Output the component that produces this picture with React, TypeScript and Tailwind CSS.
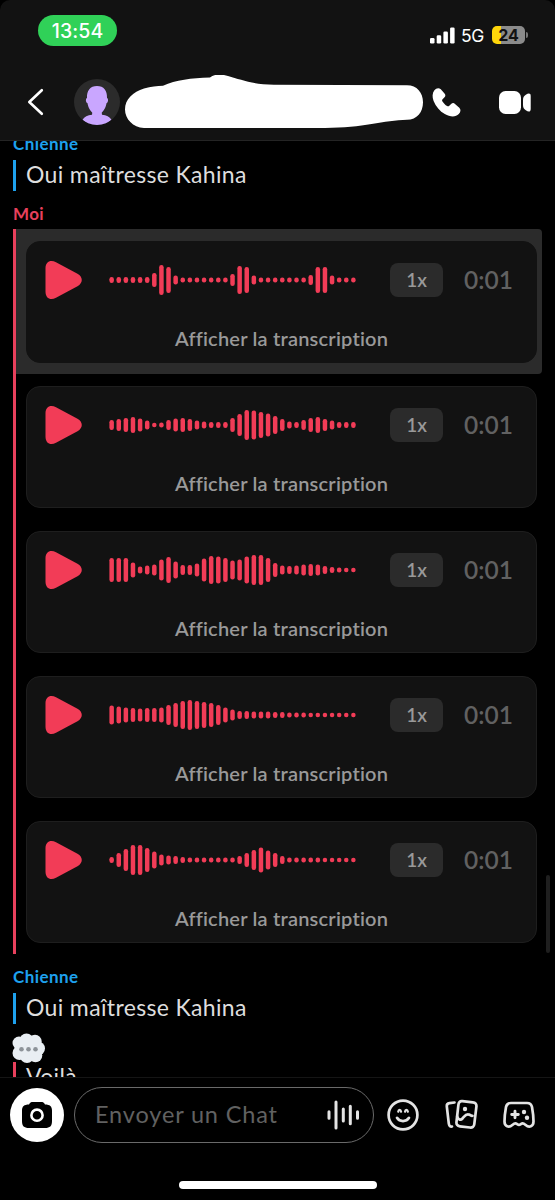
interface VoiceNote {
  id: number;
  levels: number[];
  highlighted?: boolean;
}

const notes: VoiceNote[] = [
  {
    id: 1,
    highlighted: true,
    levels: [6, 6, 6, 6, 6, 6, 14, 30, 26, 9, 5, 5, 5, 5, 5, 5, 5, 12, 28, 26, 9, 5, 5, 5, 5, 5, 5, 5, 10, 26, 26, 9, 5, 5, 5],
  },
  {
    id: 2,
    levels: [10, 12, 14, 16, 13, 9, 4.5, 5, 10, 13, 14, 12, 9, 7, 6, 6, 6, 14, 22, 30, 29, 26, 23, 18, 12, 7, 6, 10, 14, 16, 12, 9, 6, 6, 6],
  },
  {
    id: 3,
    levels: [24, 24, 24, 15, 7, 9, 11, 21, 26, 17, 10, 10, 13, 23, 28, 27, 24, 19, 21, 27, 30, 30, 24, 14, 9, 8, 9, 11, 12, 11, 8, 6, 5, 4.5, 4.5],
  },
  {
    id: 4,
    levels: [19, 17, 15, 14, 13, 14, 14, 15, 20, 24, 28, 30, 28, 26, 24, 20, 15, 11, 8, 8, 7, 7, 7, 6, 6, 5, 5, 5, 4.5, 4.5, 4.5, 4.5, 4.5, 4.5, 4.5],
  },
  {
    id: 5,
    levels: [6, 14, 22, 30, 30, 24, 17, 11, 9, 8, 6, 5, 5, 5, 5, 5, 5, 5, 8, 14, 20, 25, 19, 14, 8, 5, 5, 5, 5, 5, 4.5, 4.5, 4.5, 4.5, 4.5],
  },
];

function StatusBar() {
  return (
    <div className="flex h-[62px] items-start justify-between pl-[38px] pr-[27px] pt-[15px]">
      <div className="flex h-[31px] w-[79px] items-center justify-center rounded-full bg-[#30d158] pt-[2px] font-['Inter'] text-[19.5px] font-medium tracking-[0.1px] text-white">
        13:54
      </div>
      <div className="mt-[11px] flex h-[18px] items-center">
        <svg width="25" height="17" viewBox="0 0 25 17" fill="#fff">
          <rect x="0" y="11" width="4.5" height="5.5" rx="1.3" />
          <rect x="6.7" y="8.2" width="4.5" height="8.3" rx="1.3" />
          <rect x="13.4" y="4.5" width="4.5" height="12" rx="1.3" />
          <rect x="20.1" y="0.5" width="4.5" height="16" rx="1.3" />
        </svg>
        <span className="ml-[6px] w-[25px] whitespace-nowrap pt-[2px] font-['Inter'] text-[17.5px] leading-[18px] tracking-[-0.3px] text-white">5G</span>
        <div className="ml-[6px] flex h-[18px] w-[33px] items-center justify-center rounded-[5px] bg-[linear-gradient(to_right,#ffd60a_26%,#8b8b8b_26%)] font-['Inter'] text-[16px] font-bold leading-none text-[#121212]">
          24
        </div>
        <div className="ml-[1px] h-[6px] w-[2px] rounded-r-full bg-[#777]" />
      </div>
    </div>
  );
}

function Header() {
  return (
    <header className="h-[141px] shrink-0 rounded-t-[10px] border-b border-[#242424] bg-[#121212]">
      <StatusBar />
      <div className="flex h-[80px] items-center">
        <svg className="ml-[27px]" width="18" height="28" viewBox="0 0 18 28" fill="none" stroke="#fff" strokeWidth="2.6" strokeLinecap="round" strokeLinejoin="round">
          <path d="M14.8 2.2L2.3 14l12.5 11.8" />
        </svg>
        <svg className="ml-[29px]" width="46" height="46" viewBox="0 0 46 46">
          <defs>
            <clipPath id="avatar">
              <circle cx="23" cy="23" r="23" />
            </clipPath>
          </defs>
          <circle cx="23" cy="23" r="23" fill="#2b2b2b" />
          <g fill="#c9a6ff" clipPath="url(#avatar)">
            <path d="M23 7C16.200 7 12.700 11.500 13 19c-1.600.4-1.400 4.500.5 5.200.8 5.300 4.300 11 9.500 11s8.700-5.700 9.500-11c1.900-.7 2.100-4.800.5-5.200.3-7.500-3.200-12-10-12z" />
            <path d="M18.500 32h9l.5 3.700c4.500.4 7.500 2 9.500 5L30 47H16l-7.500-6.300c2-3 5-4.600 9.500-5z" />
          </g>
        </svg>
        <svg className="ml-[4px]" width="300" height="54" viewBox="0 0 300 54" fill="#fff">
          <path d="M1 34.500C1 24 9 17 20 13.500c7-2 13-2.300 19-2.800C52 5 67 3 86 2.500c4-3.500 11-3.700 18-1.500 13 3.500 24 8.500 46 8.700l133 .5c10 0 16 7.500 16 17 0 10-6 17.500-16 17.500-23 .5-44 8.200-82 8.200H20C9 52.500 1 44 1 34.500z" />
        </svg>
        <svg className="ml-[7px]" width="31" height="31" viewBox="0 0 31 31" fill="#fff">
          <path d="M3.400 3.200C5.200.9 8 .5 9.800 2.300l3.700 4.100c1.200 1.300 1.100 2.700 0 3.900l-1.900 1.900c-.7.8-.6 1.500-.1 2.200 1.200 1.900 2.700 3.400 4.600 4.600.7.500 1.500.5 2.200-.2l1.800-1.800c1.200-1.200 2.700-1.300 3.900-.1l4.300 3.800c1.800 1.800 1.500 4.400-.5 6.400-3.200 3.200-8.700 3-14-.1C8.900 24.100 4.800 19.600 2.600 13.900 1.100 9.900 1.200 6 3.400 3.200z" />
        </svg>
        <svg className="ml-[36px]" width="34" height="25" viewBox="0 0 34 25" fill="#fff">
          <rect x="1" y="1" width="22" height="23" rx="6.500" />
          <path d="M25 10c0-2.600 1-4 2.800-5.200C30.500 3 32.700 3 32.700 6v13c0 3-2.200 3.200-4.900 1.300C26 19.100 25 17.700 25 15z" />
        </svg>
      </div>
    </header>
  );
}

function Waveform({ levels }: { levels: number[] }) {
  return (
    <svg width="248" height="32" viewBox="0 0 248 32" fill="#f23c57">
      {levels.map((h, i) => (
        <rect key={i} x={0.4 + i * 7.11} y={16 - h / 2} width="4.5" height={h} rx="2.2" />
      ))}
    </svg>
  );
}

function VoiceMessage({ note }: { note: VoiceNote }) {
  return (
    <div className={`h-[145px] w-[526px] rounded-r-[4px] pl-[10px] pt-[12px] ${note.highlighted ? 'bg-[#2b2b2b]' : ''}`}>
      <div className={`h-[122px] w-[511px] rounded-[14px] border bg-[#121212] ${note.highlighted ? 'border-[#121212]' : 'border-[#1e1e1e]'}`}>
        <div className="flex h-[76px] items-center pl-[18px]">
          <svg width="38" height="40" viewBox="0 0 38 40" fill="#f23c57">
            <path d="M.5 8.500C.5 1.500 5.500-.8 11 2.200l21.500 11.600c5.700 3.200 5.700 9.200 0 12.400L11 37.800C5.500 40.800.5 38.500.5 31.500z" />
          </svg>
          <div className="ml-[26px]">
            <Waveform levels={note.levels} />
          </div>
          <div className="ml-[33px] flex h-[34px] w-[53px] items-center justify-center rounded-[8px] bg-[#2b2b2b] text-[19px] font-semibold text-[#999]">
            1x
          </div>
          <span className="ml-[21px] pt-px text-[24.5px] font-semibold leading-none text-[#616161]">0:01</span>
        </div>
        <div className="mt-[7px] text-center text-[20px] font-semibold leading-[26px] tracking-[0.2px] text-[#999]">
          Afficher la transcription
        </div>
      </div>
    </div>
  );
}

function TextMessage({ name, text }: { name: string; text: string }) {
  return (
    <div className="pl-[13px]">
      <div className="h-[20px] text-[17px] font-bold leading-[20px] tracking-[0.42px] text-[#1ea1ee]">{name}</div>
      <div className="mt-[6px] h-[31px] border-l-[3px] border-[#1ea1ee] pl-[10px] text-[23px] leading-[29px] tracking-[0.35px] text-[#dedede]">
        {text}
      </div>
    </div>
  );
}

function TypingBubble() {
  return (
    <svg className="absolute left-[11px] top-[1032px]" width="36" height="34" viewBox="0 0 36 34">
      <g fill="#e9eef3">
        <circle cx="8" cy="11" r="6.5" />
        <circle cx="15.5" cy="8.5" r="7" />
        <circle cx="24" cy="9.5" r="6.7" />
        <circle cx="27" cy="16.5" r="7" />
        <circle cx="24.5" cy="23.5" r="6.8" />
        <circle cx="16" cy="24" r="7" />
        <circle cx="8.5" cy="21" r="7" />
        <rect x="8" y="8" width="19" height="17" />
      </g>
      <g fill="#8d9399">
        <circle cx="10.5" cy="17.3" r="2.3" />
        <circle cx="17.5" cy="17.3" r="2.3" />
        <circle cx="24.5" cy="17.3" r="2.3" />
      </g>
    </svg>
  );
}

function Composer() {
  return (
    <footer className="h-[123px] shrink-0 border-t border-[#151515] bg-black">
      <div className="flex h-[74px] items-center pl-[10px]">
        <div className="flex h-[54px] w-[54px] items-center justify-center rounded-full bg-white">
          <svg width="32" height="28" viewBox="0 0 32 28">
            <path d="M8 3.500C9 1.500 10 1 12 1h8c2 0 3 .5 4 2.500 5 0 7 2 7 6V20c0 5-2 7-7 7H8c-5 0-7-2-7-7V9.500c0-4 2-6 7-6z" fill="#000" />
            <circle cx="16" cy="14.2" r="5.6" fill="none" stroke="#fff" strokeWidth="2.6" />
          </svg>
        </div>
        <div className="ml-[10px] flex h-[56px] w-[300px] items-center justify-between rounded-full border border-[#6a6a6a] pl-[20px] pr-[13px]">
          <span className="whitespace-nowrap text-[23.5px] tracking-[0.85px] text-[#616161]">Envoyer un Chat</span>
          <svg width="34" height="30" viewBox="0 0 34 30" stroke="#e4e4e4" strokeWidth="3" strokeLinecap="round">
            <path d="M3 11.800v6.400M10 2v26M17.300 9v12M24.300 6.200v17.600M31.500 11.800v6.400" />
          </svg>
        </div>
        <svg className="ml-[12px]" width="34" height="34" viewBox="0 0 34 34" fill="none" stroke="#e4e4e4" strokeLinecap="round" strokeLinejoin="round">
          <circle cx="17" cy="17" r="14.4" strokeWidth="2.7" />
          <path d="M12.200 13.700c.4-2.400 2.400-2.400 2.900 0M19 13.700c.4-2.400 2.400-2.400 2.900 0" strokeWidth="2.2" />
          <path d="M11 19.800c2.700 4.300 9.300 4.300 12 0" strokeWidth="2.7" />
        </svg>
        <svg className="ml-[25px]" width="33" height="32" viewBox="0 0 33 32" fill="none" stroke="#e4e4e4" strokeWidth="2.7" strokeLinecap="round" strokeLinejoin="round">
          <path d="M9.500 3.500L4.500 4.200C2.600 4.500 1.600 5.500 1.800 7.300l2 17.300c.3 2 1.300 3.200 3.200 2.900" />
          <path d="M17.300 2.200l10.500 1.200c2.600.3 3.900 1.800 3.600 4.300l-2.100 17.400c-.3 2.600-1.900 3.700-4.400 3.400l-10-1.200c-2.500-.3-3.700-1.900-3.400-4.400l1.900-17c.3-2.600 1.500-4 3.900-3.700z" />
          <path d="M12.200 17.500c.8 3 3.300 4.200 5.300 2 2-2.200 3.300-4.500 5.700-4.200 2 .2 2.700 2 4.300 1.500" />
          <circle cx="20" cy="10" r="2.2" fill="#e4e4e4" stroke="none" />
        </svg>
        <svg className="ml-[24px]" width="34" height="30" viewBox="0 0 34 30" fill="none" stroke="#e4e4e4" strokeWidth="2.7" strokeLinecap="round" strokeLinejoin="round">
          <path d="M9 3h16c3 0 4.500 1.500 5 4.100.9 5 1.500 10.300 1.500 14.400 0 5-4.500 6.400-7.800 3.500-1.200-1-1.900-1.600-3.100-1.600-1.300 0-2.300 1.500-3.600 1.500s-2.300-1.500-3.600-1.500c-1.200 0-1.900.6-3.100 1.600-3.300 2.900-7.800 1.500-7.800-3.500 0-4.100.6-9.400 1.500-14.400C4.500 4.500 6 3 9 3z" />
          <path d="M13 11.200v6.600M9.700 14.500h6.600" strokeWidth="2.9" />
          <g fill="#e4e4e4" stroke="none">
            <circle cx="22" cy="12" r="2.2" />
            <circle cx="25" cy="17.8" r="2.2" />
          </g>
        </svg>
      </div>
      <div className="mx-auto mt-[29px] h-[8px] w-[198px] rounded-full bg-white" />
    </footer>
  );
}

export default function App() {
  return (
    <div className="relative flex h-[1200px] w-[555px] flex-col overflow-hidden bg-black font-['Lato',sans-serif]">
      <Header />
      <main className="min-h-0 flex-1 overflow-hidden">
        <div className="-mt-[7px]">
          <TextMessage name="Chienne" text="Oui maîtresse Kahina" />
          <div className="mt-[13px] h-[25px] pl-[13px] text-[17px] font-bold leading-[20px] tracking-[0.4px] text-[#e8405c]">Moi</div>
          <div className="ml-[13px] border-l-[3px] border-[#e8405c]">
            {notes.map((note) => (
              <VoiceMessage key={note.id} note={note} />
            ))}
          </div>
          <div className="mt-[13px]">
            <TextMessage name="Chienne" text="Oui maîtresse Kahina" />
          </div>
          <div className="ml-[13px] mt-[38px] h-[31px] border-l-[3px] border-[#e8405c] pl-[10px] text-[23px] leading-[29px] tracking-[0.35px] text-[#dedede]">
            Voilà
          </div>
        </div>
      </main>
      <Composer />
      <TypingBubble />
      {/* scroll indicator */}
      <div className="absolute left-[546px] top-[875px] h-[78px] w-[4px] rounded-full bg-[#1f1f1f]" />
    </div>
  );
}
